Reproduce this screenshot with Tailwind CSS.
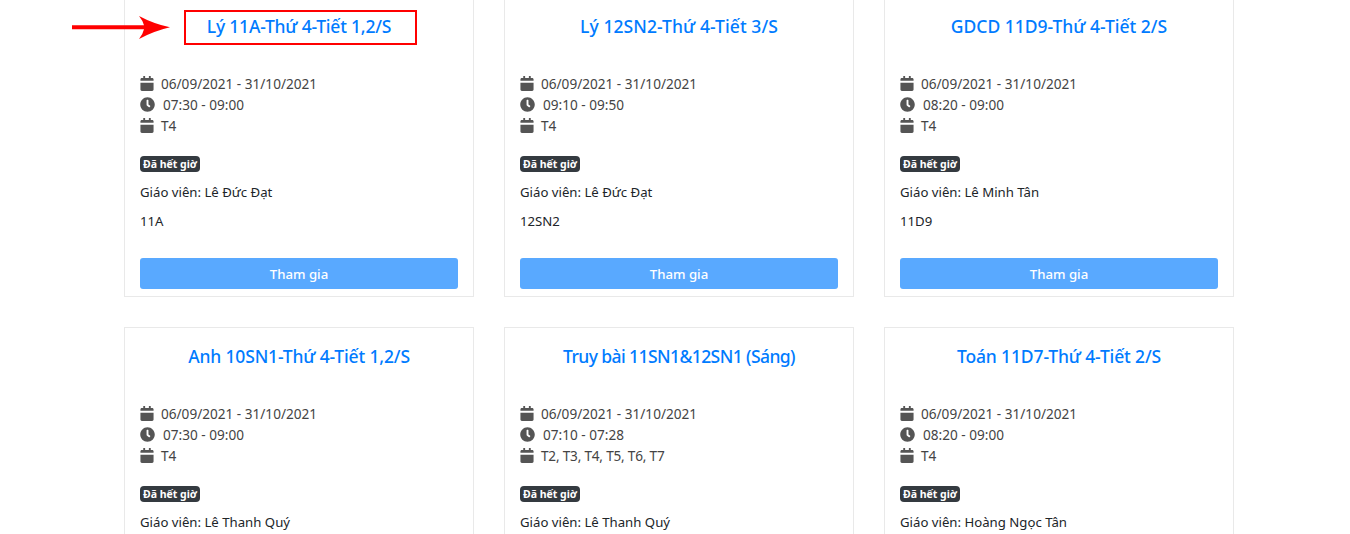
<!DOCTYPE html>
<html lang="en">
<head>
  <meta charset="UTF-8" />
  <title>Lớp học</title>
  <script src="https://cdn.jsdelivr.net/npm/@tailwindcss/browser@4"></script>
</head>
<body class="bg-white h-[534px] overflow-hidden relative font-['Noto_Sans',sans-serif] text-[13.2px] leading-[21px] text-[#212529]">
  <!-- hidden icon defs -->
  <svg class="hidden">
    <symbol id="cal" viewBox="0 0 448 512"><path d="M0 232h448v232c0 26.5-21.5 48-48 48H48c-26.5 0-48-21.5-48-48zM448 160v-48c0-26.5-21.5-48-48-48h-48V12c0-6.6-5.4-12-12-12h-40c-6.6 0-12 5.4-12 12v52H160V12c0-6.6-5.4-12-12-12h-40c-6.6 0-12 5.4-12 12v52H48C21.500 64 0 85.500 0 112v48z"/></symbol>
    <symbol id="clock" viewBox="0 0 512 512"><path d="M256 8C119 8 8 119 8 256s111 248 248 248 248-111 248-248S393 8 256 8zm92.49 313l-20 25a16 16 0 0 1-22.49 2.500l-67-49.720a40 40 0 0 1-15-31.230V112a16 16 0 0 1 16-16h32a16 16 0 0 1 16 16v144l58 42.500a16 16 0 0 1 2.490 22.500z"/></symbol>
  </svg>

  <!-- annotation -->
  <div class="absolute left-[184px] top-[10px] w-[233px] h-[35px] border-2 border-[#ff0000]"></div>
  <svg class="absolute left-[72px] top-[15px]" width="100" height="26" viewBox="0 0 100 26"><path d="M0 10.300H72Q71 6 67 1Q82 9 98 12.300Q82 16 67 24Q71 19 72 14.300H0Z" fill="#ff0000"/></svg>

  <div class="grid grid-cols-[350px_350px_350px] gap-[30px] pl-[124px] -mt-[3px]">

    <div class="h-[300px] border border-[#e9e9e9] px-[15px] pt-[15px] flex flex-col">
      <h5 class="text-[17.500px] leading-[26px] font-medium text-center text-[#007bff] tracking-[-0.2px]">Lý 11A-Thứ 4-Tiết 1,2/S</h5>
      <div class="mt-[34px] text-[#444] text-[13.600px]">
        <div class="flex items-center"><svg class="w-[14px] h-[15px] mr-[7px] fill-[#555]"><use href="#cal"/></svg>06/09/2021 - 31/10/2021</div>
        <div class="flex items-center"><svg class="w-[15px] h-[15px] mr-[8px] fill-[#555]"><use href="#clock"/></svg>07:30 - 09:00</div>
        <div class="flex items-center"><svg class="w-[14px] h-[15px] mr-[7px] fill-[#555]"><use href="#cal"/></svg>T4</div>
      </div>
      <span class="mt-[20px] w-[60px] h-4 rounded bg-[#343a40] text-white text-[10.500px] leading-4 font-bold text-center">Đã hết giờ</span>
      <p class="mt-[10px]">Giáo viên: Lê Đức Đạt</p>
      <p class="mt-2">11A</p>
      <button class="mt-[26px] h-[31px] pt-px rounded-[3px] bg-[#59a9ff] text-white font-medium">Tham gia</button>
    </div>

    <div class="h-[300px] border border-[#e9e9e9] px-[15px] pt-[15px] flex flex-col">
      <h5 class="text-[17.500px] leading-[26px] font-medium text-center text-[#007bff] tracking-[0.08px]">Lý 12SN2-Thứ 4-Tiết 3/S</h5>
      <div class="mt-[34px] text-[#444] text-[13.600px]">
        <div class="flex items-center"><svg class="w-[14px] h-[15px] mr-[7px] fill-[#555]"><use href="#cal"/></svg>06/09/2021 - 31/10/2021</div>
        <div class="flex items-center"><svg class="w-[15px] h-[15px] mr-[8px] fill-[#555]"><use href="#clock"/></svg>09:10 - 09:50</div>
        <div class="flex items-center"><svg class="w-[14px] h-[15px] mr-[7px] fill-[#555]"><use href="#cal"/></svg>T4</div>
      </div>
      <span class="mt-[20px] w-[60px] h-4 rounded bg-[#343a40] text-white text-[10.500px] leading-4 font-bold text-center">Đã hết giờ</span>
      <p class="mt-[10px]">Giáo viên: Lê Đức Đạt</p>
      <p class="mt-2">12SN2</p>
      <button class="mt-[26px] h-[31px] pt-px rounded-[3px] bg-[#59a9ff] text-white font-medium">Tham gia</button>
    </div>

    <div class="h-[300px] border border-[#e9e9e9] px-[15px] pt-[15px] flex flex-col">
      <h5 class="text-[17.500px] leading-[26px] font-medium text-center text-[#007bff]">GDCD 11D9-Thứ 4-Tiết 2/S</h5>
      <div class="mt-[34px] text-[#444] text-[13.600px]">
        <div class="flex items-center"><svg class="w-[14px] h-[15px] mr-[7px] fill-[#555]"><use href="#cal"/></svg>06/09/2021 - 31/10/2021</div>
        <div class="flex items-center"><svg class="w-[15px] h-[15px] mr-[8px] fill-[#555]"><use href="#clock"/></svg>08:20 - 09:00</div>
        <div class="flex items-center"><svg class="w-[14px] h-[15px] mr-[7px] fill-[#555]"><use href="#cal"/></svg>T4</div>
      </div>
      <span class="mt-[20px] w-[60px] h-4 rounded bg-[#343a40] text-white text-[10.500px] leading-4 font-bold text-center">Đã hết giờ</span>
      <p class="mt-[10px]">Giáo viên: Lê Minh Tân</p>
      <p class="mt-2">11D9</p>
      <button class="mt-[26px] h-[31px] pt-px rounded-[3px] bg-[#59a9ff] text-white font-medium">Tham gia</button>
    </div>

    <div class="h-[300px] border border-[#e9e9e9] px-[15px] pt-[15px] flex flex-col">
      <h5 class="text-[17.500px] leading-[26px] font-medium text-center text-[#007bff] tracking-[-0.15px]">Anh 10SN1-Thứ 4-Tiết 1,2/S</h5>
      <div class="mt-[34px] text-[#444] text-[13.600px]">
        <div class="flex items-center"><svg class="w-[14px] h-[15px] mr-[7px] fill-[#555]"><use href="#cal"/></svg>06/09/2021 - 31/10/2021</div>
        <div class="flex items-center"><svg class="w-[15px] h-[15px] mr-[8px] fill-[#555]"><use href="#clock"/></svg>07:30 - 09:00</div>
        <div class="flex items-center"><svg class="w-[14px] h-[15px] mr-[7px] fill-[#555]"><use href="#cal"/></svg>T4</div>
      </div>
      <span class="mt-[20px] w-[60px] h-4 rounded bg-[#343a40] text-white text-[10.500px] leading-4 font-bold text-center">Đã hết giờ</span>
      <p class="mt-[10px]">Giáo viên: Lê Thanh Quý</p>
    </div>

    <div class="h-[300px] border border-[#e9e9e9] px-[15px] pt-[15px] flex flex-col">
      <h5 class="text-[17.500px] leading-[26px] font-medium text-center text-[#007bff] tracking-[-0.58px]">Truy bài 11SN1&amp;12SN1 (Sáng)</h5>
      <div class="mt-[34px] text-[#444] text-[13.600px]">
        <div class="flex items-center"><svg class="w-[14px] h-[15px] mr-[7px] fill-[#555]"><use href="#cal"/></svg>06/09/2021 - 31/10/2021</div>
        <div class="flex items-center"><svg class="w-[15px] h-[15px] mr-[8px] fill-[#555]"><use href="#clock"/></svg>07:10 - 07:28</div>
        <div class="flex items-center tracking-[-0.2px]"><svg class="w-[14px] h-[15px] mr-[7px] fill-[#555]"><use href="#cal"/></svg>T2, T3, T4, T5, T6, T7</div>
      </div>
      <span class="mt-[20px] w-[60px] h-4 rounded bg-[#343a40] text-white text-[10.500px] leading-4 font-bold text-center">Đã hết giờ</span>
      <p class="mt-[10px]">Giáo viên: Lê Thanh Quý</p>
    </div>

    <div class="h-[300px] border border-[#e9e9e9] px-[15px] pt-[15px] flex flex-col">
      <h5 class="text-[17.500px] leading-[26px] font-medium text-center text-[#007bff] tracking-[-0.13px]">Toán 11D7-Thứ 4-Tiết 2/S</h5>
      <div class="mt-[34px] text-[#444] text-[13.600px]">
        <div class="flex items-center"><svg class="w-[14px] h-[15px] mr-[7px] fill-[#555]"><use href="#cal"/></svg>06/09/2021 - 31/10/2021</div>
        <div class="flex items-center"><svg class="w-[15px] h-[15px] mr-[8px] fill-[#555]"><use href="#clock"/></svg>08:20 - 09:00</div>
        <div class="flex items-center"><svg class="w-[14px] h-[15px] mr-[7px] fill-[#555]"><use href="#cal"/></svg>T4</div>
      </div>
      <span class="mt-[20px] w-[60px] h-4 rounded bg-[#343a40] text-white text-[10.500px] leading-4 font-bold text-center">Đã hết giờ</span>
      <p class="mt-[10px]">Giáo viên: Hoàng Ngọc Tân</p>
    </div>

  </div>
</body>
</html>
